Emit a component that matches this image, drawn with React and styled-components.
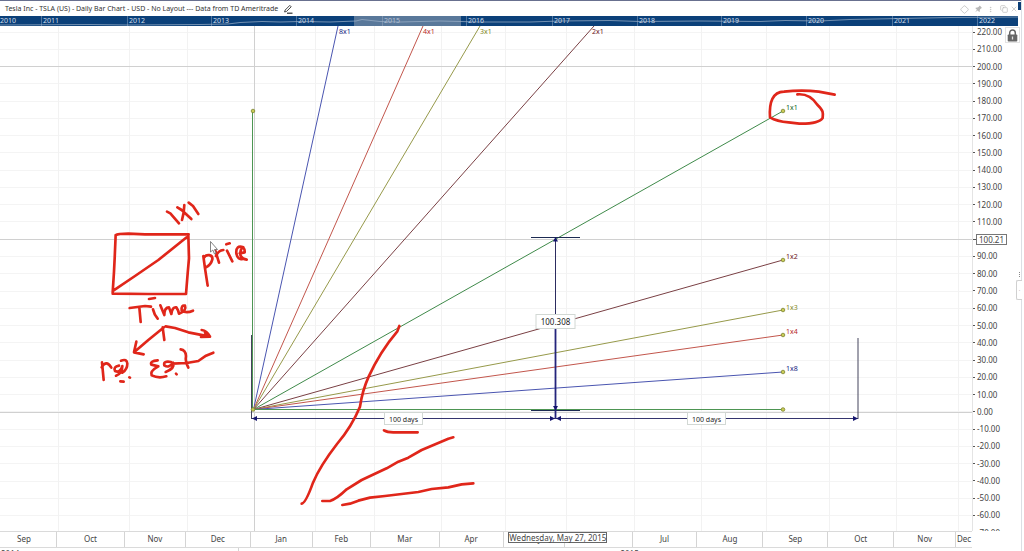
import React from 'react';
import styled, { createGlobalStyle } from 'styled-components';
import { Copy, Diamond, MoreVertical, X } from 'lucide-react';
import { TiPin } from 'react-icons/ti';

const GlobalStyle = createGlobalStyle`
  * {
    box-sizing: border-box;
  }
  body {
    margin: 0;
    background: #fff;
    color: #444;
    font-family: 'Noto Sans', 'Open Sans', sans-serif;
    font-size: 8px;
    line-height: 12px;
  }
`;

const Page = styled.div`
  display: flex;
  height: 100vh;
  overflow: hidden;
`;
const Main = styled.main`
  display: flex;
  flex: 1;
  flex-direction: column;
  min-width: 0;
`;
const Rail = styled.aside`
  position: relative;
  width: 3px;
  border-left: 1px solid #dcdfe4;
`;
const RailHandle = styled.button`
  position: absolute;
  top: 280px;
  right: 2px;
  width: 6px;
  height: 20px;
  padding: 0;
  border: 1px solid #d0d0d0;
  border-right: 0;
  border-radius: 2px 0 0 2px;
  background: #fff;
  color: #888;
  font-size: 6px;
  line-height: 16px;

  &::before {
    content: '';
    position: absolute;
    top: -9px;
    left: 2px;
    height: 5px;
    border-left: 1px dotted #888;
  }
`;
const Header = styled.header`
  display: flex;
  align-items: center;
  height: 16px;
  padding: 1px 0 0 5px;
  border-top: 1px solid #68708f;
`;
const Title = styled.h1`
  margin: 0;
  color: #333;
  font-size: 7px;
  font-weight: 400;
  line-height: 12px;
  white-space: nowrap;
`;
const IconButton = styled.button`
  display: flex;
  align-items: center;
  justify-content: center;
  width: ${(props) => props.$width || 13}px;
  height: 12px;
  padding: 0;
  border: 0;
  background: none;
  color: ${(props) => props.$color || '#b8b8b8'};
`;
const Tools = styled.div`
  display: flex;
  margin-left: auto;
`;
const WindowMark = styled.span`
  align-self: flex-start;
  width: 3px;
  height: 8px;
  background: #0d3f78;
`;

const Navigator = styled.nav`
  position: relative;
  display: flex;
  height: 10px;
  margin-right: 3px;
  overflow: hidden;
  background: #0b4079;
`;
const Year = styled.span`
  flex: ${(props) => props.$weight} 1 0;
  min-width: 0;
  padding-left: ${(props) => (props.$first ? 0 : 1)}px;
  border-left: ${(props) => (props.$first ? '0' : '1px solid #50759f')};
  color: #d5dfeb;
  font-size: 7px;
  line-height: 10px;
`;
const Selection = styled.div`
  position: absolute;
  top: 0;
  bottom: 0;
  left: 34.8%;
  width: 10.5%;
  background: rgba(155, 165, 182, 0.55);
`;
const Spark = styled.svg`
  position: absolute;
  inset: 0;
  width: 100%;
  height: 100%;
`;

const Body = styled.div`
  display: flex;
  flex: 1;
  min-height: 0;
`;
const Plot = styled.svg`
  display: block;
  flex: 1;
  min-width: 0;
  height: 100%;
`;
const PriceAxis = styled.div`
  position: relative;
  width: 49px;
  overflow: hidden;
  border-left: 1px solid #e4e4e4;
`;
const Prices = styled.ul`
  display: flex;
  flex-direction: column;
  justify-content: space-between;
  height: calc(100% + 8px);
  margin: 0;
  padding: 0;
  list-style: none;
`;
const Price = styled.li`
  display: flex;
  align-items: center;
  gap: ${(props) => (props.$current ? 0 : 2)}px;
  height: 12px;

  &::before {
    content: '';
    width: ${(props) => (props.$current ? 3 : 2)}px;
    height: 1px;
    background: #555;
  }
`;
const CurrentPrice = styled.span`
  padding: 0 2px;
  border: 1px solid #777;
  background: #fff;
  line-height: 9px;
`;
const LockButton = styled.button`
  position: absolute;
  top: 1px;
  right: 1px;
  display: flex;
  justify-content: center;
  align-items: center;
  width: 15px;
  height: 16px;
  padding: 0;
  border: 1px solid #e2e2e2;
  background: #fff;
`;

const Footer = styled.footer`
  position: relative;
  height: 20px;
  margin-right: 49px;
  border-top: 1px solid #dadada;
`;
const MonthRow = styled.div`
  display: flex;
  height: 16px;
  margin-left: -8px;
  border-bottom: 1px solid #dadada;
`;
const Month = styled.span`
  flex: ${(props) => props.$weight} 1 0;
  min-width: 0;
  border-right: 1px solid #d4d4d4;
  line-height: 13px;
  text-align: center;

  &:last-child {
    border-right: 0;
  }
`;
const YearRow = styled.div`
  display: flex;
`;
const YearCell = styled.span`
  flex: ${(props) => props.$weight} 1 0;
  padding-left: ${(props) => (props.$center ? 48 : 1)}px;
  border-left: ${(props) => (props.$center ? '1px solid #d4d4d4' : '0')};
  text-align: ${(props) => (props.$center ? 'center' : 'left')};
`;
const DateFlag = styled.time`
  position: absolute;
  top: 0;
  left: 52.3%;
  border: 1px solid #666;
  background: #fff;
  line-height: 9px;
  white-space: nowrap;
`;

const years = [
  [2010, 42], [2011, 86], [2012, 84], [2013, 85], [2014, 86], [2015, 84],
  [2016, 86], [2017, 85], [2018, 84], [2019, 85], [2020, 86], [2021, 85],
  [2022, 40],
];

const months = [
  ['Sep', 65], ['Oct', 68], ['Nov', 61], ['Dec', 65], ['Jan', 62],
  ['Feb', 58], ['Mar', 69], ['Apr', 64], ['May', 61], ['Jun', 68],
  ['Jul', 65], ['Aug', 66], ['Sep', 65], ['Oct', 66], ['Nov', 62],
  ['Dec', 16],
];

const prices = Array.from({ length: 30 }, (_, i) => 220 - i * 10);

const columns = [58, 129, 187, 315, 374, 441, 505, 566, 634, 701, 766, 829, 896, 958];

const GREEN = '#3f8a4a';
const MAROON = '#7a4044';
const OLIVE = '#96994a';
const RED = '#c2564c';
const BLUE = '#4a55b0';
const NAVY = '#15156e';

const fan = [
  { label: '8x1', x: 338, y: 26, tx: 339, ty: 34, color: BLUE, text: '#14247f' },
  { label: '4x1', x: 423, y: 26, tx: 423, ty: 34, color: RED, text: '#b8281f' },
  { label: '3x1', x: 480, y: 26, tx: 480, ty: 34, color: OLIVE, text: '#7f8722' },
  { label: '2x1', x: 594, y: 26, tx: 592, ty: 34, color: MAROON, text: '#6c1420' },
  { label: '1x1', x: 783, y: 111, tx: 786, ty: 110, color: GREEN, text: '#0f6422', end: true },
  { label: '1x2', x: 783, y: 260, tx: 786, ty: 259, color: MAROON, text: '#6c1420', end: true },
  { label: '1x3', x: 783, y: 310, tx: 786, ty: 310, color: OLIVE, text: '#7f8722', end: true },
  { label: '1x4', x: 783, y: 335, tx: 786, ty: 334, color: RED, text: '#b8281f', end: true },
  { label: '1x8', x: 783, y: 372, tx: 786, ty: 371, color: BLUE, text: '#14247f', end: true },
];

function Handle({ x, y }) {
  return <circle cx={x} cy={y} r="1.8" fill="#c9cb55" stroke="#7c8430" strokeWidth="0.8" />;
}

function Tag({ x, y, width, height, size, children }) {
  return (
    <g>
      <rect
        x={x - width / 2}
        y={y - height / 2}
        width={width}
        height={height}
        fill="#fff"
        stroke="#d2d8d4"
      />
      <text x={x} y={y + 3} textAnchor="middle" fontSize={size} fill="#222">
        {children}
      </text>
    </g>
  );
}

function Grid() {
  return (
    <g shapeRendering="crispEdges">
      {prices.map((price, i) => (
        <line key={price} x1="0" x2="972" y1={32 + i * 17.27} y2={32 + i * 17.27} stroke="#f4f4f4" />
      ))}
      {columns.map((x) => (
        <line key={x} x1={x} x2={x} y1="26" y2="531" stroke="#f2f2f2" />
      ))}
      <path d="M0 66.5H972M0 239.5H972M0 412.5H972M254.5 26V531" stroke="#d0d0d0" />
    </g>
  );
}

function Measures() {
  return (
    <g>
      <g stroke={NAVY} fill="none">
        <path d="M252 418.5H858" stroke="#34346e" />
        <path d="M251.5 335V419M858 338V419" stroke="#44445c" />
        <path d="M531 237.5H580M531 410.5H580" stroke="#1c2a52" />
        <path d="M555.5 238V320" stroke="#2c2c60" />
        <path d="M555.5 328V418" stroke="#24247c" strokeWidth="1.8" />
      </g>
      <path
        d="M252 418.5l5-2.5v5zM555 418.5l-5-2.5v5zM556 418.5l5-2.5v5zM858 418.5l-5-2.5v5zM555.5 237l-2.5 4.5h5zM555.5 410.5l-2.5-4.5h5z"
        fill={NAVY}
      />
      <Tag x={403.5} y={418.5} width={38} height={12} size={7}>100 days</Tag>
      <Tag x={706.5} y={418.5} width={38} height={12} size={7}>100 days</Tag>
      <Tag x={555.5} y={321.5} width={39} height={14} size={8}>100.308</Tag>
    </g>
  );
}

// freehand marker, each group is drawn on its own 3x canvas
function Ink() {
  return (
    <g fill="none" stroke="#e0261a" strokeLinecap="round" strokeLinejoin="round">
      <g transform="translate(95 190) scale(0.33333)" strokeWidth="8">
        <path d="M62 135L59 205L57 245L53 308M62 136Q68 131 100 131L150 133L281 133M280 135L282 205L278 250L273 312M53 311L160 312L273 312M55 302L120 258L190 210L275 142" />
        <path d="M216 65L226 70L252 100M247 52L260 60L289 87M268 45L266 68L261 90M281 38L294 48L310 72" />
        <path d="M325 198L330 235L338 287M326 204C334 190 354 194 352 208Q348 224 333 232M361 182L372 218M363 198Q370 181 385 180M396 182L412 214M394 163L404 160" />
        <path d="M445 172Q422 164 424 190Q428 212 444 206M434 190L449 187Q450 170 439 176Q428 204 455 209" />
        <path d="M104 354L150 348L168 350M133 352L137 396M174 358Q178 375 188 386M162 327L180 324" />
        <path d="M196 346L208 375Q208 352 222 352L229 372Q232 350 244 352Q250 360 252 371Q276 362 270 347Q258 344 260 362Q274 371 294 362" />
        <path d="M207 412L160 450L118 486M124 455L117 487L146 493M203 412L208 450M212 409L240 414L280 427L345 440M320 420Q336 422 345 440L318 441M330 428L340 437" />
        <path d="M21 517L26 570M20 532Q34 508 49 533M72 527Q54 530 60 543Q76 550 82 528Q82 550 63 557M78 512Q96 505 97 521Q97 538 82 548M76 574L86 575M103 562L105 563" />
        <path d="M188 511Q164 513 169 524L190 529Q164 543 170 556Q190 566 214 559M228 516Q204 512 208 526Q222 536 234 518Q240 536 212 546M232 521L275 519L310 513L333 497L355 488M257 478Q272 480 273 498Q270 513 280 533M243 551L245 553" />
      </g>
      <g transform="translate(740 80) scale(0.33333)" strokeWidth="8">
        <path d="M172 43C204 40 220 56 232 74C250 91 250 98 248 114Q236 132 178 131L146 127Q110 124 90 112C87 66 98 36 132 35Q186 29 236 35L284 44" />
      </g>
      <g transform="translate(235 310) scale(0.33333)" strokeWidth="8">
        <path d="M493 48L487 64Q435 125 401 200Q382 242 375 290Q350 350 306 402Q255 468 234 518Q212 580 200 581" />
        <path d="M262 573L285 573Q305 567 335 538L380 510L455 475L490 455L520 443L560 420L640 386L655 382" />
        <path d="M322 585L345 581L370 572L405 563L450 558L550 546L590 537L640 532L680 523L715 520" />
        <path d="M447 361Q458 368 480 367L548 367" />
      </g>
    </g>
  );
}

function Chart() {
  return (
    <Plot viewBox="0 26 972 505" role="img" aria-label="Gann fan on TSLA daily bars">
      <Grid />
      {fan.map((ray) => (
        <line key={ray.label} x1="253.5" y1="409.5" x2={ray.x} y2={ray.y} stroke={ray.color} />
      ))}
      <path d="M252.5 111V409.5H783" fill="none" stroke="#4d9552" />
      {fan.map((ray) => (
        <g key={ray.label}>
          {ray.end && <Handle x={ray.x} y={ray.y} />}
          <text x={ray.tx} y={ray.ty} fontSize="7" fill={ray.text}>
            {ray.label}
          </text>
        </g>
      ))}
      <Measures />
      <Handle x={253} y={111} />
      <Handle x={253} y={409.5} />
      <Handle x={783} y={409.5} />
      <Ink />
      <path
        d="M210.5 241.5V252L212.8 250L214.5 254L216 253.2L214.5 249.5H217.5Z"
        fill="#fff"
        stroke="#666"
        strokeWidth="0.8"
      />
    </Plot>
  );
}

function App() {
  return (
    <>
      <GlobalStyle />
      <Page>
        <Main>
          <Header>
            <Title>
              Tesla Inc - TSLA (US) - Daily Bar Chart - USD - No Layout --- Data
              from TD Ameritrade
            </Title>
            <IconButton $width={20} $color="#333" aria-label="Edit title">
              <svg width="10" height="10" viewBox="0 0 10 10" fill="none" stroke="currentColor">
                <path d="M1.6 8L2.2 6L6.8 1.4L8.2 2.8L3.6 7.4Z" strokeWidth="0.9" />
                <path d="M4 9.2H9.5" strokeWidth="1.2" />
              </svg>
            </IconButton>
            <Tools>
              <IconButton aria-label="Link colour"><Diamond size={9} /></IconButton>
              <IconButton aria-label="Pin"><TiPin size={10} /></IconButton>
              <IconButton aria-label="More"><MoreVertical size={7} /></IconButton>
              <IconButton aria-label="Restore"><Copy size={8} /></IconButton>
              <IconButton $width={8} aria-label="Close"><X size={8} /></IconButton>
            </Tools>
            <WindowMark />
          </Header>
          <Navigator aria-label="Years">
            {years.map(([year, weight], i) => (
              <Year key={year} $weight={weight} $first={i === 0}>
                {year}
              </Year>
            ))}
            <Selection />
            <Spark viewBox="0 0 1018 10" preserveAspectRatio="none">
              <path
                d="M0 9L90 8.5L130 9L200 8.5L228 8L240 6.5L262 5.5L280 6L300 5.5L330 6L356 5L362 3.5L380 5.5L400 6L440 5L480 6L530 6L560 5L610 4.5L640 5.5L700 5L760 5.5L785 4.5L820 5L850 3.5L900 2.5L950 1.5L1018 1"
                fill="none"
                stroke="#9db2c9"
                strokeWidth="0.7"
              />
            </Spark>
          </Navigator>
          <Body>
            <Chart />
            <PriceAxis>
              <Prices>
                {prices.map((price) => (
                  <Price key={price} $current={price === 100}>
                    {price === 100 ? (
                      <CurrentPrice>100.21</CurrentPrice>
                    ) : (
                      price.toFixed(2)
                    )}
                  </Price>
                ))}
              </Prices>
              <LockButton aria-label="Lock price scale">
                <svg width="11" height="13" viewBox="0 0 11 13">
                  <path d="M2.7 6V3.8a2.8 2.8 0 0 1 5.6 0V6" fill="none" stroke="#666" strokeWidth="1.5" />
                  <rect x="0.7" y="5.5" width="9.6" height="7" rx="0.8" fill="#666" />
                  <path d="M5.5 7.5v3" stroke="#ddd" strokeWidth="1.3" />
                </svg>
              </LockButton>
            </PriceAxis>
          </Body>
          <Footer>
            <MonthRow>
              {months.map(([month, weight], i) => (
                <Month key={i} $weight={weight}>
                  {month}
                </Month>
              ))}
            </MonthRow>
            <YearRow>
              <YearCell $weight={250}>2014</YearCell>
              <YearCell $weight={722} $center>2015</YearCell>
            </YearRow>
            <DateFlag dateTime="2015-05-27">Wednesday, May 27, 2015</DateFlag>
          </Footer>
        </Main>
        <Rail>
          <RailHandle aria-label="Expand panel">·</RailHandle>
        </Rail>
      </Page>
    </>
  );
}

export default App;
